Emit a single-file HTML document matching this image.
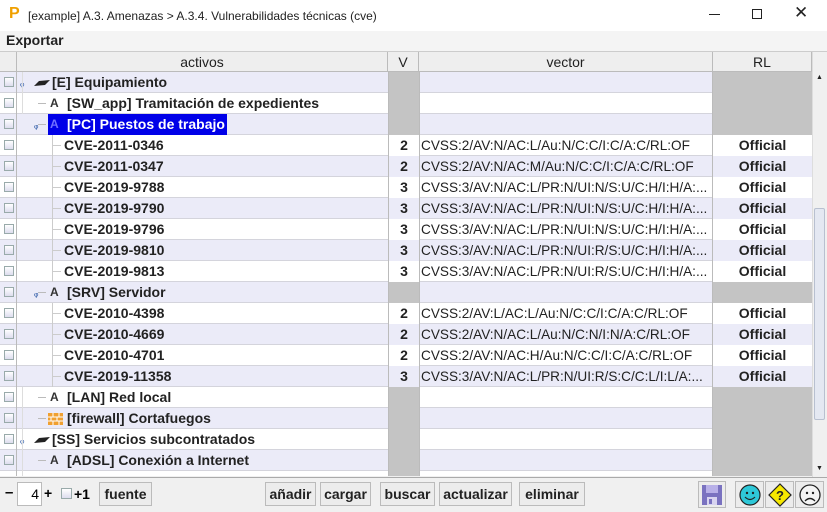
<!DOCTYPE html>
<html><head><meta charset="utf-8">
<style>
*{margin:0;padding:0;box-sizing:border-box}
body{width:827px;height:512px;overflow:hidden;background:#f0f0f0;font-family:"Liberation Sans",Arial,sans-serif;position:relative}
.abs{position:absolute}
.title{left:0;top:0;width:827px;height:31px;background:#fff;font-size:12px;color:#222}
.menu{left:0;top:31px;width:827px;height:20px;background:#f4f4f4;font-weight:bold;font-size:14px;color:#222}
.hdr{top:52px;height:20px;background:#eeeeee;border-right:1px solid #bbb;border-bottom:1px solid #bbb;font-size:14px;color:#222;text-align:center;line-height:20px}
.row{left:0;width:812px;height:21px;border-bottom:1px solid #d4d4dc}
.c{position:absolute;top:0;height:21px;line-height:21px;font-size:14px;color:#222}
.cb{position:absolute;left:4px;top:5px;width:10px;height:10px;border:1px solid #9aa;background:linear-gradient(#fff,#dde)}
.b{font-weight:bold}
.btn{position:absolute;top:482px;height:24px;border:1px solid #bbb;background:#ececec;font-weight:bold;font-size:14px;color:#222;line-height:22px;text-align:center}
</style></head><body>
<div class="abs title">
  <div class="abs" style="left:9px;top:5px;font-weight:bold;font-size:16px;color:#f0a000;font-family:'Liberation Sans'">P</div>
  <div class="abs" style="left:28px;top:9px">[example] A.3. Amenazas &gt; A.3.4. Vulnerabilidades técnicas (cve)</div>
  <div class="abs" style="left:709px;top:14px;width:11px;height:1px;background:#222"></div>
  <div class="abs" style="left:752px;top:9px;width:10px;height:10px;border:1px solid #222"></div>
  <div class="abs" style="left:794px;top:3px;font-size:17px">✕</div>
</div>
<div class="abs menu"><span class="abs" style="left:6px;top:1px">Exportar</span></div>
<div class="abs" style="left:0;top:51px;width:827px;height:1px;background:#ccc"></div>
<div class="abs hdr" style="left:0;width:17px"></div>
<div class="abs hdr" style="left:17px;width:371px">activos</div>
<div class="abs hdr" style="left:388px;width:31px">V</div>
<div class="abs hdr" style="left:419px;width:294px">vector</div>
<div class="abs hdr" style="left:713px;width:99px">RL</div>
<div id="rows"></div>
<div class="abs" style="left:812px;top:52px;width:15px;height:425px;background:#f0f0f0;border-left:1px solid #ddd"></div>
<div class="abs" style="left:816px;top:74px;font-size:7px;color:#222">▲</div>
<div class="abs" style="left:814px;top:208px;width:11px;height:212px;background:#e4e8f2;border:1px solid #b8c0d0;border-radius:2px"></div>
<div class="abs" style="left:816px;top:465px;font-size:7px;color:#222">▼</div>
<div class="abs" style="left:0;top:477px;width:827px;height:1px;background:#aaa"></div>
<div class="abs b" style="left:5px;top:484px;font-size:15px">–</div>
<div class="abs" style="left:17px;top:482px;width:25px;height:24px;background:#fff;border:1px solid #bbb;font-size:14px;text-align:right;padding-right:2px;line-height:22px">4</div>
<div class="abs b" style="left:44px;top:485px;font-size:14px">+</div>
<div class="abs" style="left:61px;top:488px;width:11px;height:11px;border:1px solid #9aa;background:linear-gradient(#fff,#dde)"></div>
<div class="abs b" style="left:74px;top:486px;font-size:14px">+1</div>
<div class="btn" style="left:99px;width:53px">fuente</div>
<div class="btn" style="left:265px;width:51px">añadir</div>
<div class="btn" style="left:320px;width:51px">cargar</div>
<div class="btn" style="left:380px;width:55px">buscar</div>
<div class="btn" style="left:439px;width:73px">actualizar</div>
<div class="btn" style="left:519px;width:66px">eliminar</div>
<div class="btn" style="left:698px;width:28px;top:481px;height:27px">
 <svg width="24" height="24" viewBox="0 0 24 24" style="position:absolute;left:1px;top:1px"><rect x="2" y="2" width="20" height="20" fill="#7a72c0"/><rect x="6" y="2" width="12" height="8" fill="#b8b0e8"/><rect x="7" y="14" width="10" height="8" fill="#d8d4f0"/><rect x="9" y="16" width="3" height="5" fill="#7a72c0"/></svg></div>
<div class="btn" style="left:735px;width:29px;top:481px;height:27px">
 <svg width="24" height="24" viewBox="0 0 24 24" style="position:absolute;left:2px;top:1px"><circle cx="12" cy="12" r="10" fill="#2ec8d8" stroke="#222" stroke-width="1.2"/><circle cx="9" cy="10" r="1.2" fill="#222"/><circle cx="15" cy="10" r="1.2" fill="#222"/><path d="M7 14 Q12 19 17 14" stroke="#222" fill="none" stroke-width="1.2"/></svg></div>
<div class="btn" style="left:765px;width:29px;top:481px;height:27px">
 <svg width="24" height="24" viewBox="0 0 24 24" style="position:absolute;left:2px;top:1px"><path d="M12 1 L23 12 L12 23 L1 12 Z" fill="#f6e800" stroke="#222" stroke-width="1.2"/><text x="12" y="17" font-size="13" font-weight="bold" text-anchor="middle" font-family="Liberation Sans" fill="#222">?</text></svg></div>
<div class="btn" style="left:795px;width:29px;top:481px;height:27px">
 <svg width="24" height="24" viewBox="0 0 24 24" style="position:absolute;left:2px;top:1px"><circle cx="12" cy="12" r="10" fill="#f4f4f4" stroke="#222" stroke-width="1.3"/><circle cx="9" cy="10" r="1.2" fill="#222"/><circle cx="15" cy="10" r="1.2" fill="#222"/><path d="M7 18 Q12 13 17 18" stroke="#222" fill="none" stroke-width="1.3"/></svg></div>
<script>
var R=[
[0,'eq','[E] Equipamiento',null],
[1,'A','[SW_app] Tramitación de expedientes',null],
[1,'Asel','[PC] Puestos de trabajo',null],
[2,'','CVE-2011-0346',['2','CVSS:2/AV:N/AC:L/Au:N/C:C/I:C/A:C/RL:OF']],
[2,'','CVE-2011-0347',['2','CVSS:2/AV:N/AC:M/Au:N/C:C/I:C/A:C/RL:OF']],
[2,'','CVE-2019-9788',['3','CVSS:3/AV:N/AC:L/PR:N/UI:N/S:U/C:H/I:H/A:...']],
[2,'','CVE-2019-9790',['3','CVSS:3/AV:N/AC:L/PR:N/UI:N/S:U/C:H/I:H/A:...']],
[2,'','CVE-2019-9796',['3','CVSS:3/AV:N/AC:L/PR:N/UI:N/S:U/C:H/I:H/A:...']],
[2,'','CVE-2019-9810',['3','CVSS:3/AV:N/AC:L/PR:N/UI:R/S:U/C:H/I:H/A:...']],
[2,'','CVE-2019-9813',['3','CVSS:3/AV:N/AC:L/PR:N/UI:R/S:U/C:H/I:H/A:...']],
[1,'Ap','[SRV] Servidor',null],
[2,'','CVE-2010-4398',['2','CVSS:2/AV:L/AC:L/Au:N/C:C/I:C/A:C/RL:OF']],
[2,'','CVE-2010-4669',['2','CVSS:2/AV:N/AC:L/Au:N/C:N/I:N/A:C/RL:OF']],
[2,'','CVE-2010-4701',['2','CVSS:2/AV:N/AC:H/Au:N/C:C/I:C/A:C/RL:OF']],
[2,'','CVE-2019-11358',['3','CVSS:3/AV:N/AC:L/PR:N/UI:R/S:C/C:L/I:L/A:...']],
[1,'A','[LAN] Red local',null],
[1,'fw','[firewall] Cortafuegos',null],
[0,'eq','[SS] Servicios subcontratados',null],
[1,'A','[ADSL] Conexión a Internet',null],
[1,'A','[L] Instalaciones',null]
];
var h='';
R.forEach(function(r,i){
 var top=72+21*i, bg=i%2?'#ffffff':'#ebebf8';
 var H=i==19?5:21;
 h+='<div class="abs" style="left:0;top:'+top+'px;width:812px;height:'+H+'px;overflow:hidden">';
 h+='<div class="row abs" style="top:0;background:'+bg+'"></div>';
 h+='<div class="abs" style="left:16px;top:0;width:1px;height:21px;background:#bbb"></div>';
 h+='<div class="cb"></div>';
 var lv=r[0],t=r[1];
 if(lv==0){
  h+='<div class="c" style="left:20px;color:#2050a0;font-size:10px;top:1px">ᵩ</div>';
  h+='<svg class="abs" style="left:33px;top:7px" width="18" height="8"><path d="M1 7 L6 2 L17 1 L12 6 Z" fill="#222"/></svg>';
  h+='<div class="c b" style="left:52px">'+r[2]+'</div>';
 } else if(lv==1){
  h+='<div class="abs" style="left:38px;top:10px;width:8px;height:1px;background:#bbb"></div>';
  if(t=='Asel'||t=='Ap') h+='<div class="c" style="left:34px;color:#2050a0;font-size:10px;top:1px">ᵩ</div>';
  if(t=='fw'){h+='<svg class="abs" style="left:48px;top:5px" width="15" height="12"><rect width="15" height="12" fill="#f0a030"/><path d="M0 4H15M0 8H15M5 0V4M11 0V4M3 4V8M9 4V8M5 8V12M11 8V12" stroke="#fff" stroke-width="1"/></svg>';}
  else if(t!='Asel') h+='<div class="c b" style="left:50px;font-size:12px;color:#333">A</div>';
  if(t=='Asel') h+='<div class="c b" style="left:48px;width:179px;background:#0000e8;color:#fff;padding-left:19px"><span style="position:absolute;left:2px;font-size:12px;color:#7070ff">A</span>'+r[2]+'</div>';
  else h+='<div class="c b" style="left:67px">'+r[2]+'</div>';
 } else {
  h+='<div class="abs" style="left:52px;top:0;width:1px;height:21px;background:#ccc"></div>';
  h+='<div class="abs" style="left:53px;top:10px;width:8px;height:1px;background:#ccc"></div>';
  h+='<div class="c b" style="left:64px">'+r[2]+'</div>';
 }
 if(lv==1&&t!='Asel'&&t!='Ap'||lv==0) h+='<div class="abs" style="left:22px;top:0;width:1px;height:21px;background:#ddd"></div>';
 h+='<div class="abs" style="left:388px;top:0;width:1px;height:21px;background:#bbb"></div>';
 if(r[3]){
  h+='<div class="c b" style="left:389px;width:30px;text-align:center;background:'+bg+'">'+r[3][0]+'</div>';
  h+='<div class="c" style="left:421px;font-size:13.6px;white-space:nowrap">'+r[3][1]+'</div>';
  h+='<div class="c b" style="left:713px;width:99px;text-align:center;background:'+bg+'">Official</div>';
 } else {
  h+='<div class="abs" style="left:389px;top:0;width:30px;height:22px;background:#c4c4c4"></div>';
  h+='<div class="abs" style="left:713px;top:0;width:99px;height:22px;background:#c4c4c4"></div>';
 }
 h+='<div class="abs" style="left:419px;top:0;width:1px;height:21px;background:#bbb"></div>';
 h+='<div class="abs" style="left:712px;top:0;width:1px;height:21px;background:#bbb"></div>';
 h+='</div>';
});
document.getElementById('rows').innerHTML=h;
</script>
</body></html>
